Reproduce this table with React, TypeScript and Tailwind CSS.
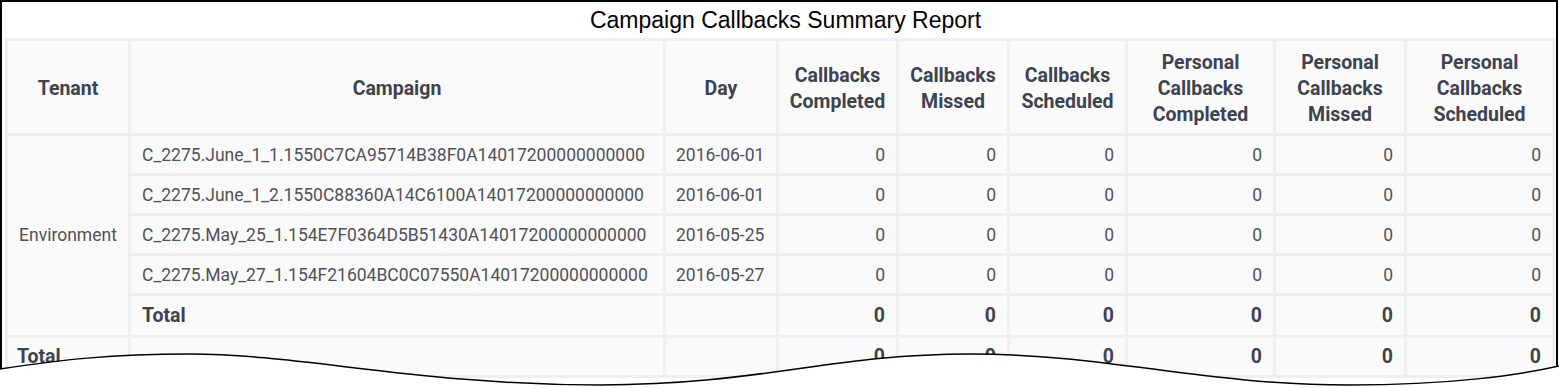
import React from "react";

const rows = [
  ["C_2275.June_1_1.1550C7CA95714B38F0A14017200000000000", "2016-06-01"],
  ["C_2275.June_1_2.1550C88360A14C6100A14017200000000000", "2016-06-01"],
  ["C_2275.May_25_1.154E7F0364D5B51430A14017200000000000", "2016-05-25"],
  ["C_2275.May_27_1.154F21604BC0C07550A14017200000000000", "2016-05-27"],
];

const headers = [
  ["Callbacks", "Completed"],
  ["Callbacks", "Missed"],
  ["Callbacks", "Scheduled"],
  ["Personal", "Callbacks", "Completed"],
  ["Personal", "Callbacks", "Missed"],
  ["Personal", "Callbacks", "Scheduled"],
];

const cell = "bg-[#fafafa] flex items-center";
const hdr = "bg-[#fafafa] flex items-center justify-center text-center pt-[4px] font-bold text-[19.5px] leading-[26px] text-[#3e4350]";
const dataTxt = "text-[17.5px] text-[#505257]";
const boldTxt = "text-[19.5px] font-bold text-[#3e4350]";
const numCell = "bg-[#fafafa] flex items-center justify-end pr-[11px]";

export default function App() {
  return (
    <div className="relative w-[1559px] h-[388px] overflow-hidden bg-white" style={{ fontFamily: "Roboto, 'Noto Sans', sans-serif" }}>
      <div className="w-[1558px] h-[420px] border-2 border-b-0 border-black pl-[3px] pr-[1px]">
        <div className="h-[36px] flex items-center justify-center pl-[11px] text-[23px] text-black" style={{ fontFamily: "'Liberation Sans', Arial, sans-serif" }}>
          Campaign Callbacks Summary Report
        </div>
        <div className="grid bg-[#eceff3] p-[3px] gap-[3px] grid-cols-[120px_532px_110px_117px_108px_115px_145px_128px_145px] grid-rows-[92px_37px_37px_37px_37px_39px_37px]">
          <div className={hdr}>Tenant</div>
          <div className={hdr}>Campaign</div>
          <div className={hdr}>Day</div>
          {headers.map((h, i) => (
            <div key={i} className={`${hdr} flex-col`}>
              {h.map((l, j) => (
                <span key={j}>{l}</span>
              ))}
            </div>
          ))}

          <div className={`${cell} justify-center row-span-5 ${dataTxt}`}>Environment</div>
          {rows.map((r, i) => (
            <React.Fragment key={i}>
              <div className={`${cell} pl-[11px] pt-[1px] ${dataTxt}`}>{r[0]}</div>
              <div className={`${cell} pl-[10px] pt-[1px] ${dataTxt}`}>{r[1]}</div>
              {Array.from({ length: 6 }).map((_, k) => (
                <div key={k} className={`${numCell} pt-[1px] ${dataTxt}`}>0</div>
              ))}
            </React.Fragment>
          ))}
          <div className={`${cell} pl-[11px] ${boldTxt}`}>Total</div>
          <div className={cell}></div>
          {Array.from({ length: 6 }).map((_, k) => (
            <div key={k} className={`${numCell} ${boldTxt}`}>0</div>
          ))}

          <div className={`${cell} pl-[9px] ${boldTxt}`}>Total</div>
          <div className={cell}></div>
          <div className={cell}></div>
          {Array.from({ length: 6 }).map((_, k) => (
            <div key={k} className={`${numCell} ${boldTxt}`}>0</div>
          ))}
        </div>
      </div>
      <svg className="absolute left-0 top-0 pointer-events-none" width="1559" height="388" viewBox="0 0 1559 388">
        <path
          d="M0,369 C60,360 110,354 190,354 C300,354 420,385 600,385 C760,385 830,354 970,354 C1110,354 1200,385 1350,385 C1450,385 1520,375 1559,366 L1559,388 L0,388 Z"
          fill="#ffffff"
        />
        <path
          d="M0,369 C60,360 110,354 190,354 C300,354 420,385 600,385 C760,385 830,354 970,354 C1110,354 1200,385 1350,385 C1450,385 1520,375 1559,366"
          fill="none"
          stroke="#000000"
          strokeWidth="1.5"
        />
      </svg>
    </div>
  );
}
